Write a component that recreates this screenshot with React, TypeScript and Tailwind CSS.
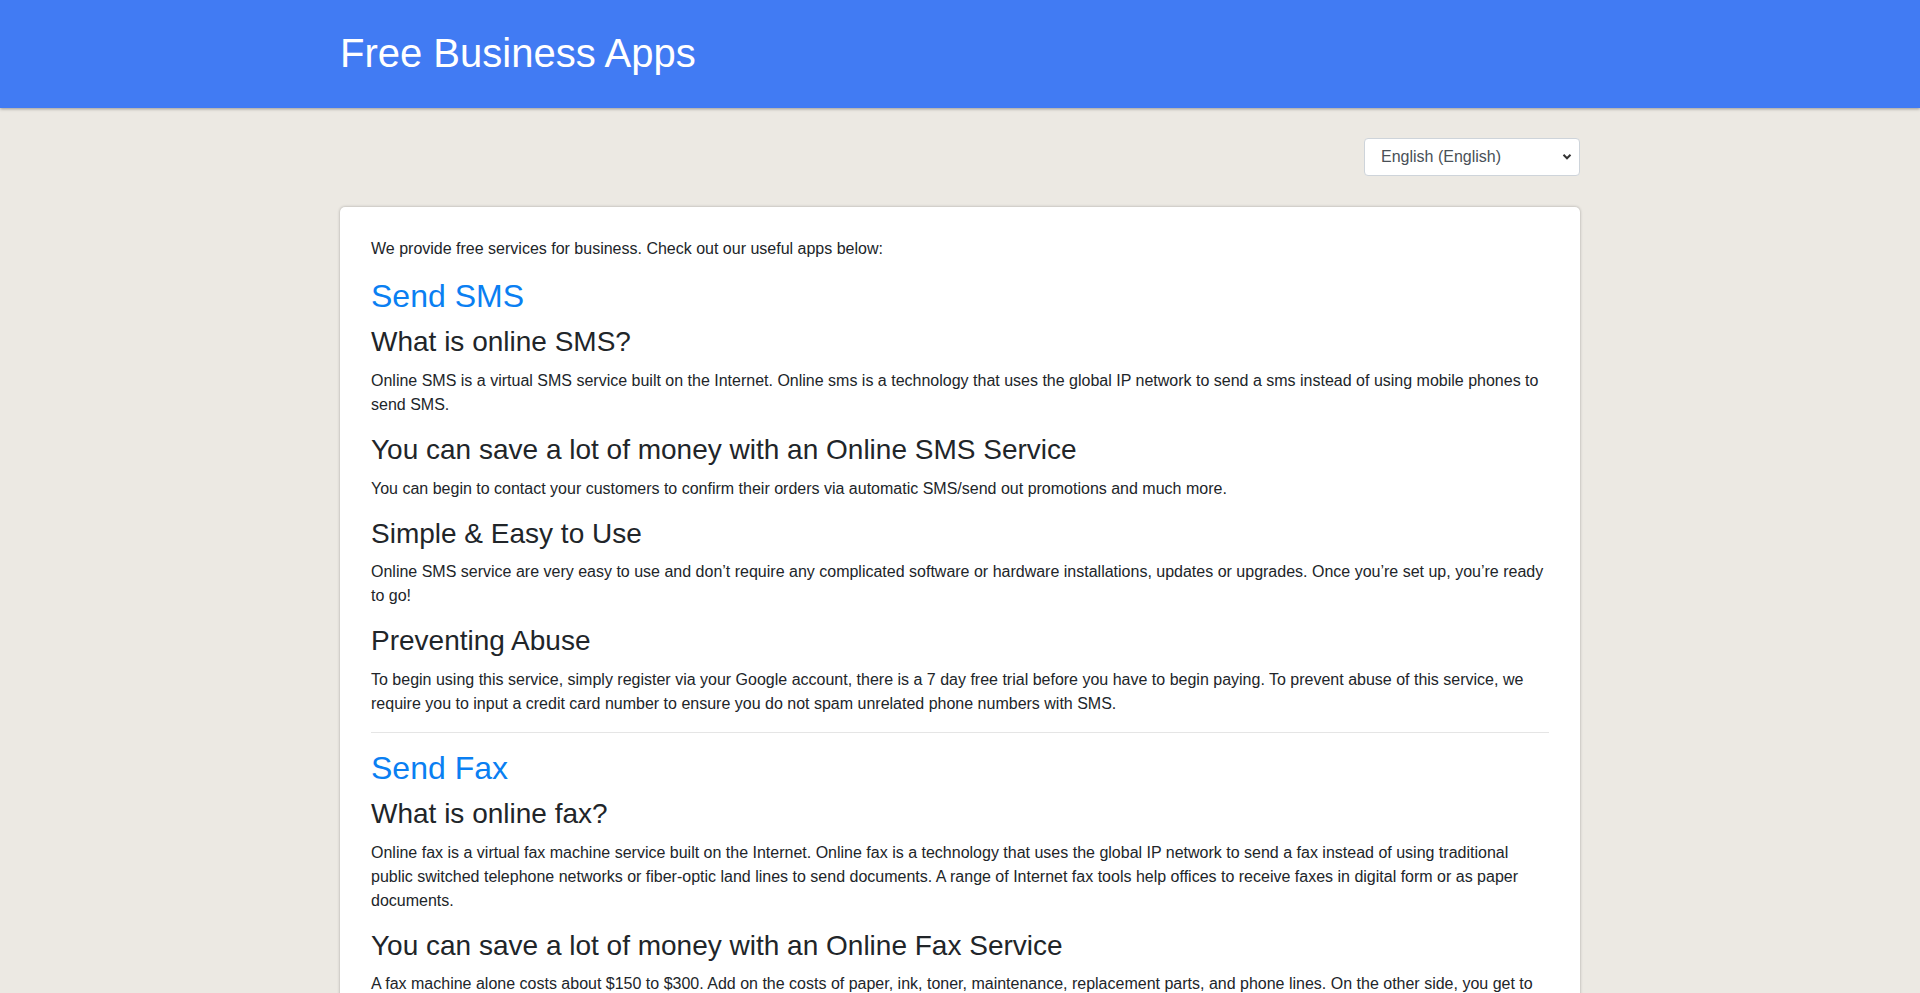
import React from 'react';

const sections = [
  {
    title: 'Send SMS',
    blocks: [
      {
        heading: 'What is online SMS?',
        text: 'Online SMS is a virtual SMS service built on the Internet. Online sms is a technology that uses the global IP network to send a sms instead of using mobile phones to send SMS.',
      },
      {
        heading: 'You can save a lot of money with an Online SMS Service',
        text: 'You can begin to contact your customers to confirm their orders via automatic SMS/send out promotions and much more.',
      },
      {
        heading: 'Simple & Easy to Use',
        text: 'Online SMS service are very easy to use and don\u2019t require any complicated software or hardware installations, updates or upgrades. Once you\u2019re set up, you\u2019re ready to go!',
      },
      {
        heading: 'Preventing Abuse',
        text: 'To begin using this service, simply register via your Google account, there is a 7 day free trial before you have to begin paying. To prevent abuse of this service, we require you to input a credit card number to ensure you do not spam unrelated phone numbers with SMS.',
      },
    ],
  },
  {
    title: 'Send Fax',
    blocks: [
      {
        heading: 'What is online fax?',
        text: 'Online fax is a virtual fax machine service built on the Internet. Online fax is a technology that uses the global IP network to send a fax instead of using traditional public switched telephone networks or fiber-optic land lines to send documents. A range of Internet fax tools help offices to receive faxes in digital form or as paper documents.',
      },
      {
        heading: 'You can save a lot of money with an Online Fax Service',
        text: 'A fax machine alone costs about $150 to $300. Add on the costs of paper, ink, toner, maintenance, replacement parts, and phone lines. On the other side, you get to enjoy a fraction of the costs with online fax services, with no hardware to buy and no supplies to maintain.',
      },
      {
        heading: 'Simple & Easy to Use',
        text: 'Online fax services are very easy to use and don\u2019t require any complicated software or hardware installations, updates or upgrades. Once you\u2019re set up, you\u2019re ready to go!',
      },
    ],
  },
];

export default function App() {
  return (
    <div className="min-h-screen bg-[#ece9e3] text-[#212529] font-['Liberation_Sans',Arial,sans-serif]">
      <header className="h-[108px] bg-[#417bf3] shadow-[0_1px_3px_rgba(0,0,0,0.35)]">
        <div className="mx-auto w-[1240px] pt-[29px]">
          <h1 className="text-[40px] leading-[48px] text-white">Free Business Apps</h1>
        </div>
      </header>

      <main className="mx-auto w-[1240px] pt-[30px] pb-10">
        <div className="flex justify-end mb-[31px]">
          <div className="relative w-[216px]">
            <select className="w-full h-[38px] appearance-none rounded-[4px] border border-[#ced4da] bg-white pl-4 pr-8 text-base text-[#495057] outline-none">
              <option>English (English)</option>
            </select>
            <svg className="pointer-events-none absolute right-[8px] top-[15px]" width="10" height="8" viewBox="0 0 10 8">
              <path d="M1.5 1.8 L5 5.3 L8.5 1.8" fill="none" stroke="#333" strokeWidth="2" />
            </svg>
          </div>
        </div>

        <div className="rounded-[5px] bg-white px-[31px] py-[30px] shadow-[0_0_3px_rgba(0,0,0,0.3)]">
          <p className="mb-4 text-base leading-6">We provide free services for business. Check out our useful apps below:</p>
          {sections.map((s, i) => (
            <div key={s.title}>
              {i > 0 && <hr className="my-4 border-0 border-t border-[rgba(0,0,0,0.1)]" />}
              <h2 className="mb-[10px] text-[32px] leading-[1.2] text-[#0a7ff2]">{s.title}</h2>
              {s.blocks.map((b) => (
                <div key={b.heading}>
                  <h3 className="mb-[10px] text-[28px] leading-[1.2]">{b.heading}</h3>
                  <p className="mb-4 text-base leading-6">{b.text}</p>
                </div>
              ))}
            </div>
          ))}
        </div>
      </main>
    </div>
  );
}
